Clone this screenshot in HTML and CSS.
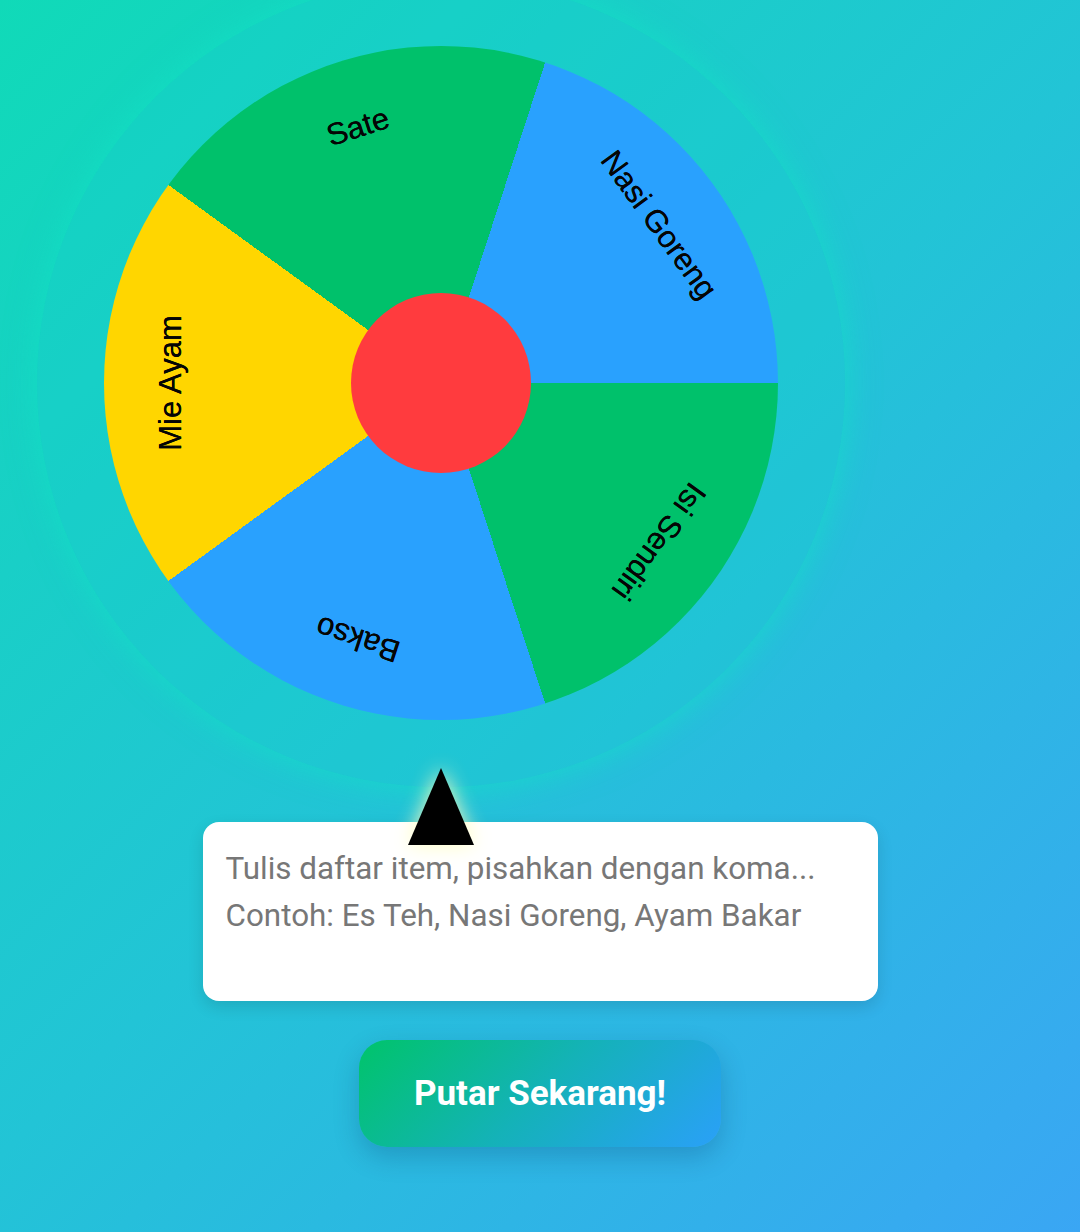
FILE: index.html
```html
<!DOCTYPE html>
<html lang="id">
<head>
<meta charset="utf-8">
<title>Putar Roda</title>
<link rel="stylesheet" href="styles.css">
</head>
<body>
<main class="page">
  <div class="wheel-area">
    <div class="halo">
      <div class="wheel">
        <span class="label l-nasi">Nasi Goreng</span>
        <span class="label l-isi">Isi Sendiri</span>
        <span class="label l-bakso">Bakso</span>
        <span class="label l-mie">Mie Ayam</span>
        <span class="label l-sate">Sate</span>
        <div class="hub"></div>
      </div>
    </div>
    <div class="pointer"></div>
  </div>
  <textarea class="items" placeholder="Tulis daftar item, pisahkan dengan koma...&#10;Contoh: Es Teh, Nasi Goreng, Ayam Bakar"></textarea>
  <button class="spin" type="button">Putar Sekarang!</button>
</main>
</body>
</html>
```

FILE: styles.css
```css
* { box-sizing: border-box; }

html, body {
  margin: 0;
  padding: 0;
}

body {
  width: 1080px;
  height: 1232px;
  overflow: hidden;
  background: linear-gradient(135deg, #10dab8 0%, #22c4d6 50%, #3aa6f4 100%);
  font-family: Roboto, "Noto Sans", Arial, sans-serif;
}

.page {
  display: flex;
  flex-direction: column;
  align-items: center;
}

.wheel-area {
  position: relative;
  align-self: flex-start;
  margin-left: 37px;
  margin-top: -21px;
  width: 808px;
  height: 808px;
}

.halo {
  width: 808px;
  height: 808px;
  border-radius: 50%;
  background: rgba(24, 206, 204, 0.3);
  box-shadow: 0 0 30px 3px rgba(18, 226, 196, 0.6);
  display: flex;
  align-items: center;
  justify-content: center;
}

.wheel {
  position: relative;
  width: 674px;
  height: 674px;
  border-radius: 50%;
  background: conic-gradient(from 18deg,
    #29a1fe 0deg 72deg,
    #00c16b 72deg 144deg,
    #29a1fe 144deg 216deg,
    #ffd600 216deg 288deg,
    #00c16b 288deg 360deg);
}

.label {
  position: absolute;
  left: 0;
  right: 0;
  top: 50%;
  height: 32px;
  margin-top: -16px;
  line-height: 32px;
  text-align: center;
  font-family: "Liberation Sans", Arial, sans-serif;
  font-size: 31px;
  color: #050505;
  text-shadow: 0 0 0.6px #050505;
  white-space: nowrap;
}

.l-nasi  { transform: rotate(54deg)  translateY(-269px); }
.l-isi   { transform: rotate(126deg) translateY(-269px); }
.l-bakso { transform: rotate(198deg) translateY(-269px); }
.l-mie   { transform: rotate(270deg) translateY(-270px); }
.l-sate  { transform: rotate(342deg) translateY(-269px); }

.hub {
  position: absolute;
  left: 50%;
  top: 50%;
  width: 180px;
  height: 180px;
  margin: -90px 0 0 -90px;
  border-radius: 50%;
  background: #ff3b3e;
}

.pointer {
  position: absolute;
  left: 371px;
  top: 789px;
  width: 0;
  height: 0;
  border-left: 33px solid transparent;
  border-right: 33px solid transparent;
  border-bottom: 77px solid #000;
  filter: drop-shadow(0 0 10px rgba(255, 255, 190, 0.95));
  z-index: 2;
}

.items {
  display: block;
  margin-top: 35px;
  width: 675px;
  height: 179px;
  padding: 23px 23px;
  border: none;
  border-radius: 16px;
  background: #fff;
  box-shadow: 0 6px 16px rgba(0, 0, 0, 0.12);
  font-family: Roboto, "Noto Sans", Arial, sans-serif;
  font-size: 31.4px;
  line-height: 47px;
  color: #333;
  resize: none;
  outline: none;
}

.items::placeholder {
  color: #777;
  opacity: 1;
}

.spin {
  margin-top: 39px;
  width: 362px;
  height: 107px;
  border: none;
  border-radius: 28px;
  background: linear-gradient(135deg, #00c46a 0%, #14b2b8 50%, #2aa0f8 100%);
  box-shadow: 0 10px 26px rgba(0, 40, 90, 0.22);
  color: #fff;
  font-family: Roboto, "Noto Sans", Arial, sans-serif;
  font-weight: 700;
  font-size: 35px;
  cursor: pointer;
}
```
